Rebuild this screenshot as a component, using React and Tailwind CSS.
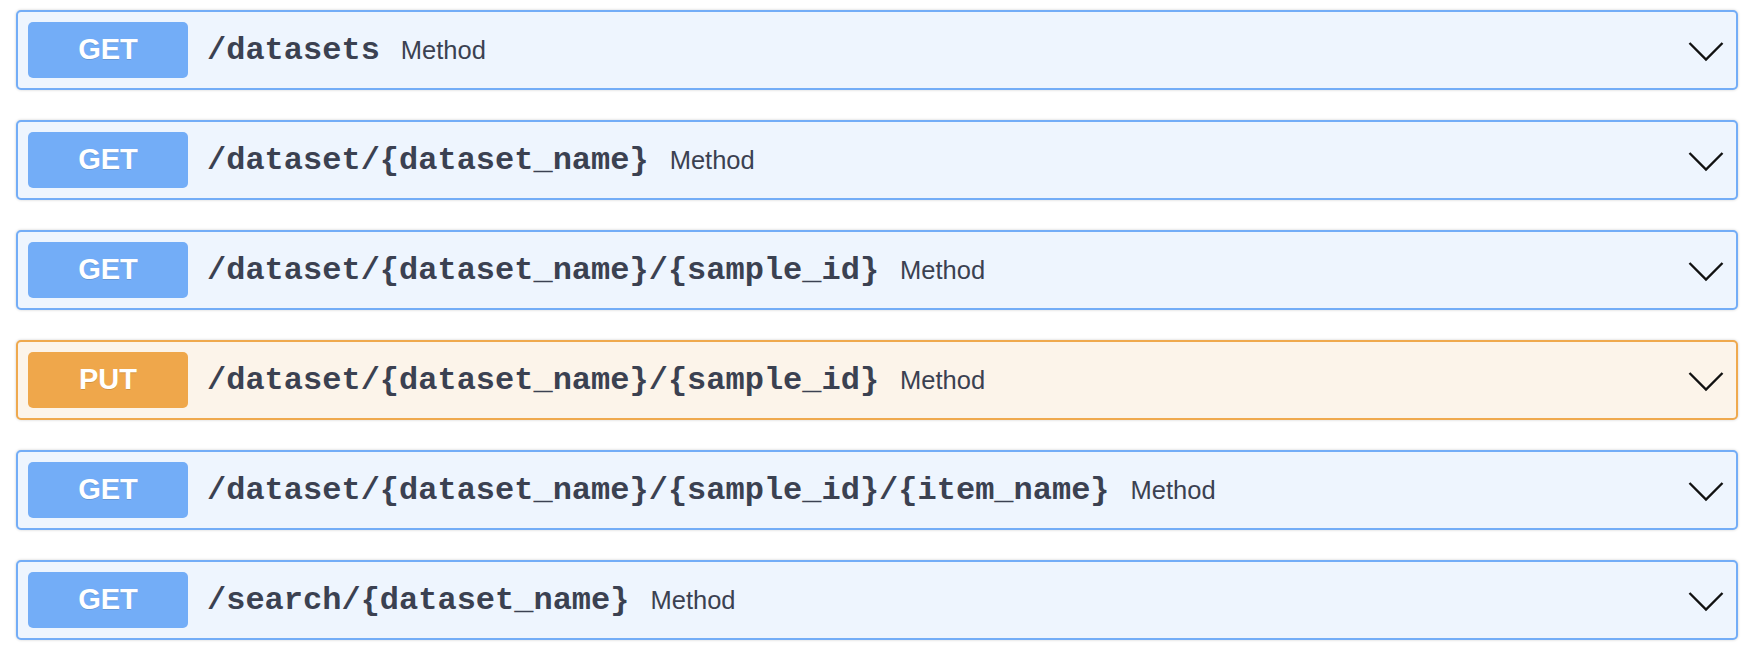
import React from 'react';

const endpoints = [
  { method: 'GET', path: '/datasets' },
  { method: 'GET', path: '/dataset/{dataset_name}' },
  { method: 'GET', path: '/dataset/{dataset_name}/{sample_id}' },
  { method: 'PUT', path: '/dataset/{dataset_name}/{sample_id}' },
  { method: 'GET', path: '/dataset/{dataset_name}/{sample_id}/{item_name}' },
  { method: 'GET', path: '/search/{dataset_name}' },
];

const styles = {
  GET: {
    box: 'bg-[#eef5fe] border-[#73adf7]',
    badge: 'bg-[#73adf7]',
  },
  PUT: {
    box: 'bg-[#fcf4ea] border-[#efa94e]',
    badge: 'bg-[#efa74b]',
  },
};

const Chevron = () => (
  <svg width="36" height="21" viewBox="0 0 36 21" className="mt-[3px]">
    <path d="M1.5 2 L18 18.5 L34.5 2" fill="none" stroke="#111" strokeWidth="2.4" />
  </svg>
);

const Endpoint = ({ method, path }) => {
  const s = styles[method];
  return (
    <div className={`flex items-center h-[80px] border-2 rounded-[5px] pl-[10px] pr-[12px] shadow-[0_0_3px_rgba(0,0,0,0.19)] ${s.box}`}>
      <span
        className={`flex items-center justify-center w-[160px] h-[56px] rounded-[5px] text-white font-bold text-[29px] [text-shadow:0_1px_0_rgba(0,0,0,0.12)] ${s.badge}`}
        style={{ fontFamily: '"Liberation Sans", Arial, sans-serif' }}
      >
        {method}
      </span>
      <span
        className="ml-[19px] font-bold text-[32px] text-[#3b4151] translate-y-[1px]"
        style={{ fontFamily: '"Liberation Mono", "Courier New", monospace' }}
      >
        {path}
      </span>
      <span
        className="ml-[21px] text-[25.5px] text-[#3b4151]"
        style={{ fontFamily: '"Liberation Sans", Arial, sans-serif' }}
      >
        Method
      </span>
      <span className="flex-1" />
      <Chevron />
    </div>
  );
};

export default function App() {
  return (
    <div className="bg-white w-[1750px] h-[652px] pl-[16px] pr-[12px] pt-[10px] flex flex-col gap-[30px]">
      {endpoints.map((ep, i) => (
        <Endpoint key={i} {...ep} />
      ))}
    </div>
  );
}
